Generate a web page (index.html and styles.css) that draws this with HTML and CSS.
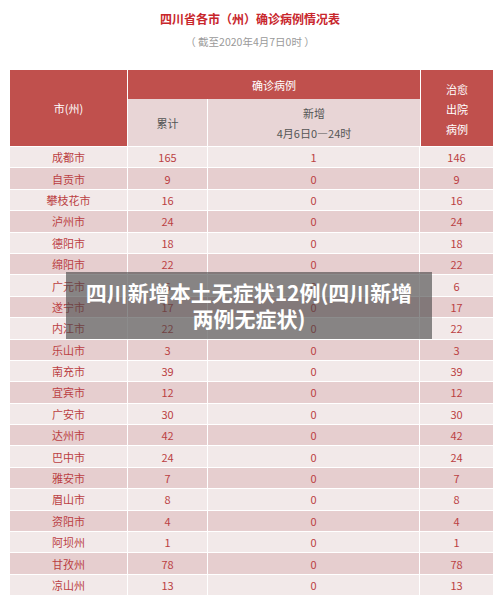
FILE: index.html
```html
<!DOCTYPE html>
<html lang="zh-CN">
<head>
    <meta charset="UTF-8">
    <meta name="viewport" content="width=device-width, initial-scale=1.0">
    <title>四川省各市（州）确诊病例情况表</title>
    <link rel="stylesheet" href="styles.css">
</head>
<body>
    <div class="caption">
        <div class="caption-title">四川省各市（州）确诊病例情况表</div>
        <div class="caption-sub">（ 截至2020年4月7日0时 ）</div>
    </div>

    <div class="sheet">
        <table class="cases">
            <colgroup>
                <col class="col-city">
                <col class="col-total">
                <col class="col-new">
                <col class="col-cured">
            </colgroup>
            <thead>
                <tr class="head-top">
                    <th rowspan="2">市(州)</th>
                    <th colspan="2" class="head-group">确诊病例</th>
                    <th rowspan="2" class="head-cured">治愈<br>出院<br>病例</th>
                </tr>
                <tr class="head-sub">
                    <th>累计</th>
                    <th>新增<br>4月6日0—24时</th>
                </tr>
            </thead>
            <tbody>
                <tr><td>成都市</td><td>165</td><td>1</td><td>146</td></tr>
                <tr><td>自贡市</td><td>9</td><td>0</td><td>9</td></tr>
                <tr><td>攀枝花市</td><td>16</td><td>0</td><td>16</td></tr>
                <tr><td>泸州市</td><td>24</td><td>0</td><td>24</td></tr>
                <tr><td>德阳市</td><td>18</td><td>0</td><td>18</td></tr>
                <tr><td>绵阳市</td><td>22</td><td>0</td><td>22</td></tr>
                <tr><td>广元市</td><td>6</td><td>0</td><td>6</td></tr>
                <tr><td>遂宁市</td><td>17</td><td>0</td><td>17</td></tr>
                <tr><td>内江市</td><td>22</td><td>0</td><td>22</td></tr>
                <tr><td>乐山市</td><td>3</td><td>0</td><td>3</td></tr>
                <tr><td>南充市</td><td>39</td><td>0</td><td>39</td></tr>
                <tr><td>宜宾市</td><td>12</td><td>0</td><td>12</td></tr>
                <tr><td>广安市</td><td>30</td><td>0</td><td>30</td></tr>
                <tr><td>达州市</td><td>42</td><td>0</td><td>42</td></tr>
                <tr><td>巴中市</td><td>24</td><td>0</td><td>24</td></tr>
                <tr><td>雅安市</td><td>7</td><td>0</td><td>7</td></tr>
                <tr><td>眉山市</td><td>8</td><td>0</td><td>8</td></tr>
                <tr><td>资阳市</td><td>4</td><td>0</td><td>4</td></tr>
                <tr><td>阿坝州</td><td>1</td><td>0</td><td>1</td></tr>
                <tr><td>甘孜州</td><td>78</td><td>0</td><td>78</td></tr>
                <tr><td>凉山州</td><td>13</td><td>0</td><td>13</td></tr>
            </tbody>
        </table>

        <div class="headline">四川新增本土无症状12例(四川新增两例无症状)</div>
    </div>
</body>
</html>
```

FILE: styles.css
```css
body {
    margin: 0;
    background-color: #fff;
    font-family: "Noto Sans CJK SC", "Noto Sans", sans-serif;
}

.caption {
    text-align: center;
    padding-top: 10px;
}

.caption-title {
    font-size: 12px;
    line-height: 17px;
    font-weight: bold;
    color: #c8262c;
}

.caption-sub {
    font-size: 10.5px;
    line-height: 16px;
    margin-top: 7px;
    color: #9a9a9a;
}

.sheet {
    position: relative;
    margin: 20px 0 0 10px;
    width: 483px;
}

.cases {
    width: 483px;
    border-collapse: separate;
    border-spacing: 0;
    table-layout: fixed;
    font-size: 11px;
    color: #bb3f43;
}

.col-city { width: 118px; }
.col-total { width: 80px; }
.col-new { width: 212px; }
.col-cured { width: 73px; }

.cases th {
    font-weight: normal;
    text-align: center;
    padding: 0;
}

.head-top th {
    background-color: #c0504d;
    color: #fff;
}

.head-top th:first-child {
    border-right: 1px solid #fff;
}

.head-top th.head-group {
    height: 29px;
    font-size: 11px;
}

.head-top th.head-cured {
    line-height: 20px;
    border-left: 1px solid #fff;
    padding-top: 2px;
}

.head-sub th {
    height: 47px;
    background-color: #e8d5d6;
    color: #555;
    line-height: 20px;
}

.head-sub th:first-child {
    border-right: 1px solid #fff;
}

.cases td {
    height: 20.4px;
    padding: 0;
    text-align: center;
    border-top: 1px solid #fff;
    border-right: 1px solid #fff;
    line-height: 14px;
}

.cases td:last-child {
    border-right: none;
}

.cases tbody tr:nth-child(odd) td {
    background-color: #f2e9e9;
}

.cases tbody tr:nth-child(even) td {
    background-color: #e6cecf;
}

.headline {
    position: absolute;
    left: 56px;
    top: 202px;
    width: 342px;
    padding: 7px 12px 8px;
    background-color: rgba(70, 70, 70, 0.62);
    color: #fff;
    font-size: 21px;
    line-height: 26px;
    font-weight: bold;
    text-align: center;
}
```
